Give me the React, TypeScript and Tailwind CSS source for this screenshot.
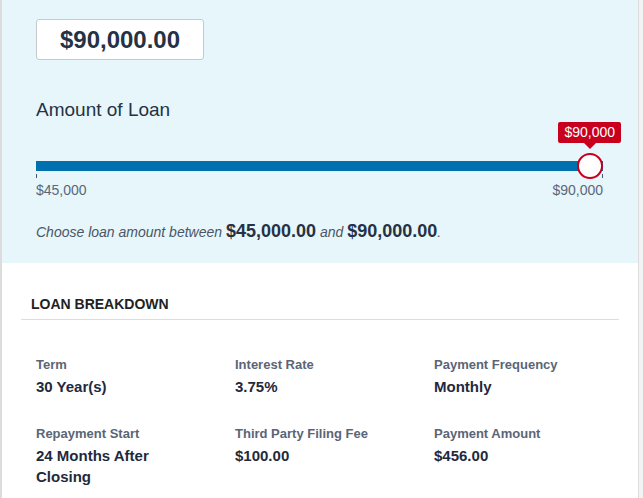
const items = [
  { label: 'Term', value: '30 Year(s)' },
  { label: 'Interest Rate', value: '3.75%' },
  { label: 'Payment Frequency', value: 'Monthly' },
  { label: 'Repayment Start', value: '24 Months After Closing' },
  { label: 'Third Party Filing Fee', value: '$100.00' },
  { label: 'Payment Amount', value: '$456.00' },
]

export default function App() {
  return (
    <div className="w-[643px] h-[498px] overflow-hidden bg-[#f2f3f5] font-['Liberation_Sans',Arial,sans-serif]">
      <div className="w-[639px] h-full bg-white border-l-2 border-r border-[#dcdcdc]">
        {/* Amount slider */}
        <section className="h-[263px] bg-[#e7f6fa] pt-[19px] pl-[34px] pr-[35px]">
          <div className="w-[168px] h-[41px] flex items-center justify-center bg-white border border-[#c9c9c9] rounded-[3px] text-[24px] font-bold text-[#253245]">
            $90,000.00
          </div>

          <h2 className="mt-[38px] text-[19px] leading-6 text-[#253245]">Amount of Loan</h2>

          <div className="relative mt-[39px] h-[10px] bg-[#0070af]">
            <div className="absolute right-0 top-[-8px] w-[26px] h-[26px] rounded-full bg-white border-2 border-[#c8001e]" />
            <div className="absolute right-[-18px] top-[-39px] flex flex-col items-center">
              <div className="h-[21px] px-[6px] flex items-center bg-[#c8001e] rounded-[2px] text-[14px] text-white">
                $90,000
              </div>
              <div className="w-0 h-0 border-l-[6px] border-r-[6px] border-t-[6px] border-l-transparent border-r-transparent border-t-[#c8001e]" />
            </div>
          </div>

          <div className="mt-[3px] flex justify-between">
            <div className="w-px h-[4px] bg-[#4a5568]" />
            <div className="w-px h-[4px] bg-[#4a5568]" />
          </div>
          <div className="mt-[4px] flex justify-between text-[14px] leading-4 text-[#5b6678]">
            <span>$45,000</span>
            <span>$90,000</span>
          </div>

          <p className="mt-[20px] text-[14px] italic text-[#4b5566]">
            Choose loan amount between{' '}
            <span className="not-italic font-bold text-[18px] text-[#253245]">$45,000.00</span> and{' '}
            <span className="not-italic font-bold text-[18px] text-[#253245]">$90,000.00</span>.
          </p>
        </section>

        {/* Breakdown */}
        <section className="px-[19px]">
          <h3 className="pt-[33px] pb-[7px] pl-[10px] text-[14px] leading-4 font-bold uppercase text-[#222222] border-b border-[#dddddd]">
            Loan Breakdown
          </h3>
          <div className="grid grid-cols-[199px_199px_170px] gap-y-[29px] pl-[15px] pt-[37px]">
            {items.map((item) => (
              <div key={item.label}>
                <div className="text-[13px] leading-4 font-bold text-[#5a6577]">{item.label}</div>
                <div className="mt-[3px] w-[160px] text-[15px] leading-[21px] font-bold text-[#1f2a3c]">
                  {item.value}
                </div>
              </div>
            ))}
          </div>
        </section>
      </div>
    </div>
  )
}
